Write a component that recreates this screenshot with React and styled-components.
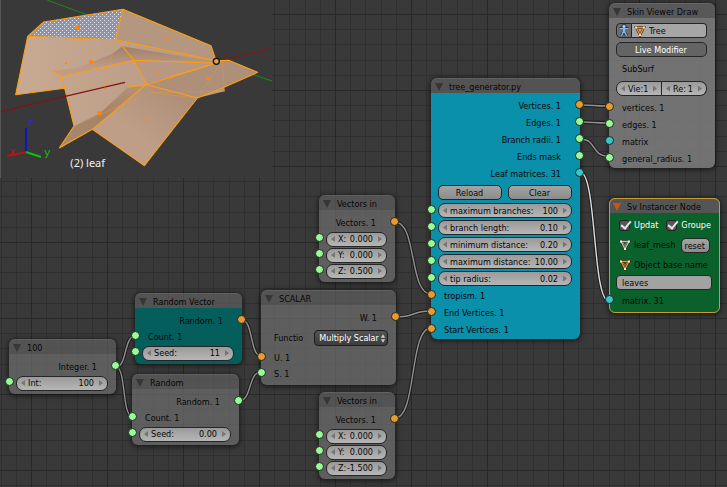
import React, { useId, useState } from "react";
import styled, { createGlobalStyle, css } from "styled-components";

const GlobalStyle = createGlobalStyle`
  * { box-sizing: border-box; }
  body { margin: 0; background: #393939; }
  body, button, input, select {
    font-family: "DejaVu Sans Condensed", "DejaVu Sans", sans-serif;
    font-size: 9px;
    line-height: 12px;
    color: #060606;
  }
`;

const SOCKETS = { vertex: "#e89a2e", data: "#97fc97", matrix: "#33c8cc" };

const Canvas = styled.main`
  position: relative;
  width: 100%;
  min-height: 100vh;
  overflow: hidden;
  background-color: #393939;
  background-image:
    linear-gradient(to right, #282828 1px, transparent 1px),
    linear-gradient(to bottom, #282828 1px, transparent 1px),
    linear-gradient(to right, transparent 15px, #303030 15px 16px, transparent 16px 30px,
      #303030 30px 31px, transparent 31px 46px, #303030 46px 47px, transparent 47px 61px,
      #303030 61px 62px, transparent 62px),
    linear-gradient(to bottom, transparent 15px, #303030 15px 16px, transparent 16px 30px,
      #303030 30px 31px, transparent 31px 46px, #303030 46px 47px, transparent 47px 61px,
      #303030 61px 62px, transparent 62px);
  background-size: 76px 76px;
  background-position: 31px 14px;
`;

const Viewport = styled.section`
  position: absolute;
  left: 0;
  top: 0;
  width: 272px;
  height: 178px;
  background: #393939;
  border-left: 1px solid #565656;
  svg { display: block; width: 100%; height: 100%; }
`;

const Wires = styled.svg`
  position: absolute;
  left: 0;
  top: 0;
  width: 100%;
  height: 100%;
  overflow: visible;
`;

const NodeFrame = styled.section`
  position: absolute;
  left: ${(p) => p.$x}px;
  top: ${(p) => p.$y}px;
  width: ${(p) => p.$w}px;
  border-radius: 6px;
  box-shadow: 0 1px 5px 1px rgba(0, 0, 0, 0.55);
  ${(p) => p.$active && css`outline: 1px solid #c99a35; outline-offset: -1px;`}
`;

const Header = styled.header`
  display: flex;
  align-items: center;
  gap: 6px;
  height: 15px;
  padding: 3px 4px 0;
  border-radius: 6px 6px 0 0;
  background: ${(p) => p.$fill};
  box-shadow: inset 0 1px 0 rgba(255, 255, 255, 0.08);
`;

const Collapse = styled.button`
  width: 8px;
  height: 8px;
  padding: 0;
  border: 0;
  background: ${(p) => p.$color};
  clip-path: polygon(0 0, 100% 0, 50% 100%);
`;

const Title = styled.h2`
  margin: 0;
  font-size: 9px;
  font-weight: 400;
  line-height: 12px;
  white-space: nowrap;
`;

const Body = styled.div`
  display: flex;
  flex-direction: column;
  padding: ${(p) => p.$top}px 8px ${(p) => p.$bottom}px 7px;
  border-radius: 0 0 6px 6px;
  background: ${(p) => p.$fill};
`;

const Row = styled.div`
  position: relative;
  display: flex;
  align-items: center;
  height: ${(p) => p.$h}px;
  gap: ${(p) => p.$gap || 0}px;
`;

const RowText = styled.span`
  flex: 1;
  padding: 0 11px 0 6px;
  text-align: ${(p) => (p.$out ? "right" : "left")};
  white-space: nowrap;
`;

const Socket = styled.i`
  position: absolute;
  top: calc(50% - 6px);
  ${(p) => (p.$out ? "right: -12px;" : "left: -11px;")}
  width: 9px;
  height: 9px;
  border: 1px solid #1c2a1c;
  border-radius: 50%;
  background: ${(p) => p.$color};
`;

const Pill = styled.div`
  display: flex;
  flex: 1;
  min-width: 0;
  align-items: center;
  height: 15px;
  padding: 0 4px;
  border: 1px solid #262626;
  border-radius: ${(p) =>
    p.$side === "left" ? "7px 0 0 7px" : p.$side === "right" ? "0 7px 7px 0" : "7px"};
  ${(p) => p.$side === "right" && "border-left: 0;"}
  background: linear-gradient(#9a9a9a, #b6b6b6);
  label { padding-left: 3px; white-space: nowrap; }
`;

const Step = styled.button`
  flex: none;
  width: 4px;
  height: 6px;
  padding: 0;
  border: 0;
  background: #757575;
  clip-path: ${(p) => (p.$next ? "polygon(0 0, 100% 50%, 0 100%)" : "polygon(100% 0, 0 50%, 100% 100%)")};
`;

const Value = styled.input`
  flex: 1;
  width: 0;
  min-width: 0;
  padding: 0 5px 0 0;
  border: 0;
  background: none;
  text-align: right;
  outline: none;
`;

const Button = styled.button`
  flex: ${(p) => (p.$fit ? "none" : 1)};
  height: 15px;
  padding: 1px 4px 0 3px;
  border: 1px solid #262626;
  border-radius: 5px;
  background: ${(p) => (p.$pressed ? "#646464" : "linear-gradient(#a3a3a3, #8c8c8c)")};
  color: ${(p) => (p.$pressed ? "#fff" : "#060606")};
`;

const SelectBox = styled.div`
  position: relative;
  width: 77px;
  margin-left: auto;
  svg { position: absolute; right: 2px; top: 3px; width: 6px; height: 11px; pointer-events: none; }
`;

const Select = styled.select`
  display: block;
  appearance: none;
  width: 100%;
  height: 16px;
  padding: 0 8px 0 4px;
  border: 1px solid #1c1c1c;
  border-radius: 4px;
  background: linear-gradient(#545454, #3d3d3d);
  color: #fff;
`;

const TextBox = styled.input`
  width: 100%;
  height: 15px;
  padding: 0 5px;
  border: 1px solid #262626;
  border-radius: 4px;
  background: #a2a2a2;
  outline: none;
`;

const IconButton = styled.button`
  display: flex;
  align-items: center;
  justify-content: center;
  width: 16px;
  height: 15px;
  padding: 0;
  border: 1px solid #262626;
  border-radius: 4px 0 0 4px;
  background: #6c6c6c;
`;

const ObjectPicker = styled.label`
  display: flex;
  flex: 1;
  align-items: center;
  gap: 3px;
  height: 15px;
  padding: 0 2px;
  border: 1px solid #262626;
  border-left: 0;
  border-radius: 0 4px 4px 0;
  background: #a6a6a6;
`;

const PlainInput = styled.input`
  flex: 1;
  width: 0;
  min-width: 0;
  padding: 0;
  border: 0;
  background: none;
  outline: none;
`;

const CheckLabel = styled.label`
  display: flex;
  align-items: center;
  gap: 4px;
  color: #fff;
`;

const Check = styled.input`
  position: relative;
  appearance: none;
  width: 11px;
  height: 11px;
  margin: 0;
  border: 1px solid #222;
  border-radius: 3px;
  background: #565656;
  &:checked::after {
    content: "";
    position: absolute;
    left: 3px;
    top: -2px;
    width: 4px;
    height: 8px;
    border: solid #e4e4e4;
    border-width: 0 2px 2px 0;
    transform: rotate(40deg);
  }
`;

const CheckRow = styled(Row)`
  padding-left: 3px;
  gap: 8px;
`;

const IconRow = styled(Row)`
  gap: 3px;
  padding: 0 2px 0 3px;
  white-space: nowrap;
  svg { flex: none; }
`;

const IconRowText = styled.span`
  flex: 1;
`;

const Stack = styled.div`
  display: flex;
  flex-direction: column;
  gap: 4px;
`;

const FieldRow = styled.div`
  display: flex;
  margin-bottom: ${(p) => p.$after || 0}px;
`;

function Port({ kind, out, h = 16, children }) {
  return (
    <Row $h={h}>
      <RowText $out={out}>{children}</RowText>
      <Socket $out={out} $color={SOCKETS[kind]} />
    </Row>
  );
}

function NumberField({ label, value, side }) {
  const id = useId();
  const [text, setText] = useState(value);
  return (
    <Pill $side={side}>
      <Step type="button" aria-label={`Decrease ${label}`} />
      <label htmlFor={id}>{label}</label>
      <Value id={id} value={text} onChange={(e) => setText(e.target.value)} />
      <Step type="button" $next aria-label={`Increase ${label}`} />
    </Pill>
  );
}

function FieldPort({ label, value, h = 16 }) {
  return (
    <Row $h={h}>
      <Socket $color={SOCKETS.data} />
      <NumberField label={label} value={value} />
    </Row>
  );
}

const GREY = "rgba(112, 112, 112, 0.68)";
const GREY_HEAD = "rgba(96, 96, 96, 0.68)";

function Node({ title, x, y, w, fill = GREY, head = GREY_HEAD, top = 5, bottom = 3, active, children }) {
  return (
    <NodeFrame $x={x} $y={y} $w={w} $active={active}>
      <Header $fill={head}>
        <Collapse type="button" aria-label={`Collapse ${title}`} $color={active ? "#c4561c" : "#363636"} />
        <Title>{title}</Title>
      </Header>
      <Body $fill={fill} $top={top} $bottom={bottom}>{children}</Body>
    </NodeFrame>
  );
}

function MeshIcon({ stroke, dots }) {
  return (
    <svg width="12" height="12" viewBox="0 0 12 12" fill="none" aria-hidden="true">
      <path d="M2 2.5H10L6 10Z" stroke="#30200f" strokeWidth="2.4" />
      <path d="M2 2.5H10L6 10Z" stroke={stroke} strokeWidth="1.3" />
      <path d="M3.6 3.5L6 6.5L8.4 3.5M6 6.5V9" stroke={stroke} strokeWidth=".7" />
      <g fill={dots}>
        <rect x="1" y="1.5" width="2" height="2" />
        <rect x="9" y="1.5" width="2" height="2" />
        <rect x="5" y="9" width="2" height="2" />
      </g>
    </svg>
  );
}

function FigureIcon() {
  return (
    <svg width="12" height="13" viewBox="0 0 12 13" aria-hidden="true">
      <g stroke="#1d2c42" strokeWidth="3" strokeLinejoin="round" fill="none">
        <path d="M1.5 4.5H10.5M6 4.5V8M6 7.5L3.5 11.5M6 7.5L8.5 11.5" />
        <circle cx="6" cy="2.5" r="1" />
      </g>
      <g stroke="#8fb4e6" strokeWidth="1.5" fill="none">
        <path d="M1.5 4.8H10.5M5.5 4.5V8M6.5 4.5V8M5.5 7.5L3.5 11.8M6.5 7.5L8.5 11.8" />
      </g>
      <circle cx="6" cy="2.4" r="1.6" fill="#a9c8f2" />
    </svg>
  );
}

const LINKS = [
  [580, 105, 608, 106],
  [580, 122, 608, 123],
  [580, 139, 608, 156],
  [580, 172, 609, 301, true],
  [395, 222, 431, 294],
  [396, 317, 431, 311],
  [395, 418, 431, 328],
  [242, 320, 261, 356],
  [239, 401, 261, 372],
  [116, 367, 135, 336],
  [116, 367, 132, 416],
];

function NodeLinks() {
  return (
    <Wires aria-hidden="true">
      {LINKS.map(([x1, y1, x2, y2, bright]) => {
        const h = Math.round((x2 - x1) * 0.6);
        const d = `M${x1} ${y1}C${x1 + h} ${y1} ${x2 - h} ${y2} ${x2} ${y2}`;
        return (
          <g key={d} fill="none">
            <path d={d} stroke="#1b1b1b" strokeWidth="3.4" />
            <path d={d} stroke={bright ? "#dcdcdc" : "#909090"} strokeWidth="1.4" />
          </g>
        );
      })}
    </Wires>
  );
}

function LeafScene() {
  return (
    <Viewport aria-label="3D view">
      <svg viewBox="3 0 813 534" preserveAspectRatio="none">
        <defs>
          <pattern id="dots" width="12" height="12" patternUnits="userSpaceOnUse">
            <rect width="12" height="12" fill="#9294a6" />
            <rect width="3" height="3" fill="#e2e4ee" />
            <rect x="6" y="6" width="3" height="3" fill="#e2e4ee" />
          </pattern>
          <linearGradient id="skin" x1="0" y1="0" x2="1" y2="0">
            <stop offset="0" stopColor="#c8aa93" />
            <stop offset="1" stopColor="#b39480" />
          </linearGradient>
          <linearGradient id="fold" x1="0" y1="0" x2="0" y2="1">
            <stop offset="0" stopColor="#a08069" />
            <stop offset=".7" stopColor="#bd9d87" />
          </linearGradient>
          <linearGradient id="petal" x1="1" y1="0" x2="0" y2="1">
            <stop offset="0" stopColor="#a98a74" />
            <stop offset=".6" stopColor="#bf9e87" />
          </linearGradient>
          <linearGradient id="crease" x1="0" y1="1" x2="1" y2="0">
            <stop offset="0" stopColor="#a88a70" />
            <stop offset=".5" stopColor="#a48268" />
            <stop offset="1" stopColor="#b5947b" />
          </linearGradient>
        </defs>
        <path d="M141 0L262 45M760 224L816 243" stroke="#1a8a1a" strokeWidth="3" fill="none" />
        <path d="M648 183L816 146" stroke="#8a1414" strokeWidth="3" />
        <path d="M83 109L346 119L369 28L633 137L648 182L686 181L773 217L672 262L674 274L592 294L433 497L277 388L178 444L222 378L194 265L47 284Z" fill="url(#skin)" />
        <path d="M369 28L633 137L648 182L350 121Z" fill="#b5967f" />
        <path d="M83 109L131 66L369 28L346 119Z" fill="url(#dots)" />
        <path d="M156 213L240 202L335 162L367 139L648 186L402 181L186 229Z" fill="url(#fold)" />
        <path d="M402 181L648 190L440 252Z" fill="#b89882" />
        <path d="M440 252L648 190L686 181L773 217L672 262L592 294Z" fill="#ad8f7a" />
        <path d="M384 262L440 254L592 294L433 497L277 388Z" fill="url(#petal)" />
        <path d="M178 444L222 378L300 340L384 262L440 254L277 388Z" fill="url(#crease)" />
        <g fill="none" stroke="#dd9c45" strokeWidth="2.5" opacity=".5">
          <path d="M156 213L346 121M346 119L318 248L194 265M318 248L440 254L450 278L592 294M222 378L450 278L674 274M350 121L580 165L667 193L674 274M592 294L655 200" />
        </g>
        <g fill="none" stroke="#ff9e0c" strokeWidth="3.2" strokeLinejoin="round">
          <path d="M83 109L131 66L369 28L633 137L648 182L686 181L773 217L672 262L592 294L433 497L277 388L178 444L222 378L194 265L47 284L83 109L346 119L648 182" />
          <path d="M369 28L346 119M367 139L402 181L440 252L277 388M156 213L186 229L402 181L648 190L440 254L384 262M186 229L194 265M440 254L592 294M648 190L510 230" />
        </g>
        <path d="M0 335L375 247" stroke="#7e1512" strokeWidth="3.5" />
        <g fill="#ff860a">
          <rect x="225" y="75" width="12" height="12" />
          <rect x="267" y="180" width="12" height="12" />
          <rect x="293" y="333" width="12" height="12" />
          <rect x="495" y="114" width="13" height="6" />
          <rect x="617" y="231" width="13" height="7" />
          <rect x="435" y="357" width="6" height="6" />
          <rect x="474" y="214" width="6" height="6" />
          <rect x="196" y="187" width="5" height="5" />
          <rect x="312" y="263" width="5" height="5" />
        </g>
        <circle cx="649" cy="184" r="9" fill="#e8a04c" stroke="#111" strokeWidth="4" />
        <path d="M78 384V456" stroke="#1212cc" strokeWidth="6" />
        <path d="M78 456L22 468" stroke="#c01010" strokeWidth="6" />
        <path d="M78 456L123 471" stroke="#10c010" strokeWidth="6" />
        <g fontFamily="DejaVu Sans" fontSize="33">
          <text x="84" y="378" fill="#2828e0">z</text>
          <text x="27" y="465" fill="#b81414">x</text>
          <text x="132" y="468" fill="#1cb41c">y</text>
        </g>
        <text x="211" y="502" fontFamily="Noto Sans" fontSize="33" fill="#f0f0f0">(2) leaf</text>
      </svg>
    </Viewport>
  );
}

function VectorNode({ y, z }) {
  return (
    <Node title="Vectors in" x={319} y={y} w={76}>
      <Port kind="vertex" out>Vectors. 1</Port>
      <FieldPort label="X:" value="0.000" />
      <FieldPort label="Y:" value="0.000" />
      <FieldPort label="Z:" value={z} />
    </Node>
  );
}

export default function App() {
  return (
    <>
      <GlobalStyle />
      <Canvas>
        <LeafScene />
        <NodeLinks />

        <Node title="100" x={9} y={339} w={107}>
          <Port kind="data" out>Integer. 1</Port>
          <FieldPort label="Int:" value="100" />
        </Node>

        <Node title="Random Vector" x={135} y={293} w={107} fill="rgba(0, 98, 96, 0.92)">
          <Port kind="vertex" out>Random. 1</Port>
          <Port kind="data">Count. 1</Port>
          <FieldPort label="Seed:" value="11" />
        </Node>

        <Node title="Random" x={132} y={374} w={107}>
          <Port kind="data" out>Random. 1</Port>
          <Port kind="data">Count. 1</Port>
          <FieldPort label="Seed:" value="0.00" />
        </Node>

        <Node title="SCALAR" x={261} y={290} w={135}>
          <Port kind="vertex" out>W. 1</Port>
          <Row $h={24}>
            <RowText as="label" htmlFor="scalar-function">Functio</RowText>
            <SelectBox>
              <Select id="scalar-function" defaultValue="Multiply Scalar">
                <option>Multiply Scalar</option>
              </Select>
              <svg viewBox="0 0 7 11" fill="#ccc" aria-hidden="true">
                <path d="M1 4.5L3.5 .5L6 4.5ZM1 6.5L3.5 10.5L6 6.5Z" />
              </svg>
            </SelectBox>
          </Row>
          <Port kind="vertex">U. 1</Port>
          <Port kind="data">S. 1</Port>
        </Node>

        <VectorNode y={195} z="0.500" />
        <VectorNode y={392} z="-1.500" />

        <Node title="tree_generator.py" x={431} y={78} w={149} top={4} bottom={1} head="rgba(84, 84, 84, 0.95)" fill="rgba(8, 150, 178, 0.94)">
          <Port kind="vertex" out h={17}>Vertices. 1</Port>
          <Port kind="data" out h={17}>Edges. 1</Port>
          <Port kind="data" out h={17}>Branch radii. 1</Port>
          <Port kind="data" out h={17}>Ends mask</Port>
          <Port kind="matrix" out h={17}>Leaf matrices. 31</Port>
          <Row $h={20} $gap={6}>
            <Button type="button">Reload</Button>
            <Button type="button">Clear</Button>
          </Row>
          <FieldPort h={17} label="maximum branches:" value="100" />
          <FieldPort h={17} label="branch length:" value="0.10" />
          <FieldPort h={17} label="minimum distance:" value="0.20" />
          <FieldPort h={17} label="maximum distance:" value="10.00" />
          <FieldPort h={17} label="tip radius:" value="0.02" />
          <Port kind="vertex" h={17}>tropism. 1</Port>
          <Port kind="vertex" h={17}>End Vertices. 1</Port>
          <Port kind="vertex" h={17}>Start Vertices. 1</Port>
        </Node>

        <Node title="Skin Viewer Draw" x={609} y={3} w={106} bottom={1} head="rgba(92, 92, 92, 0.9)" fill="rgba(124, 124, 124, 0.86)">
          <Stack>
            <FieldRow>
              <IconButton type="button" aria-label="Armature"><FigureIcon /></IconButton>
              <ObjectPicker>
                <MeshIcon stroke="#e8903c" dots="#ffd9a8" />
                <PlainInput aria-label="Object" defaultValue="Tree" />
              </ObjectPicker>
            </FieldRow>
            <FieldRow>
              <Button type="button" $pressed aria-pressed="true">Live Modifier</Button>
            </FieldRow>
          </Stack>
          <Row $h={24}><RowText>SubSurf</RowText></Row>
          <FieldRow $after={3}>
            <NumberField label="Vie:" value="1" side="left" />
            <NumberField label="Re:" value="1" side="right" />
          </FieldRow>
          <Port kind="vertex" h={17}>vertices. 1</Port>
          <Port kind="data" h={17}>edges. 1</Port>
          <Port kind="matrix" h={17}>matrix</Port>
          <Port kind="data" h={17}>general_radius. 1</Port>
        </Node>

        <Node title="Sv Instancer Node" x={609} y={198} w={111} top={2} bottom={1} active head="rgba(86, 86, 86, 0.95)" fill="rgba(8, 100, 42, 0.94)">
          <CheckRow $h={20}>
            <CheckLabel><Check type="checkbox" defaultChecked />Updat</CheckLabel>
            <CheckLabel><Check type="checkbox" defaultChecked />Groupe</CheckLabel>
          </CheckRow>
          <IconRow $h={20}>
            <MeshIcon stroke="#b8c4b8" dots="#e8f0e8" />
            <IconRowText>leaf_mesh</IconRowText>
            <Button type="button" $fit>reset</Button>
          </IconRow>
          <IconRow as="label" htmlFor="base-name" $h={20}>
            <MeshIcon stroke="#e8903c" dots="#ffe2c0" />
            Object base name
          </IconRow>
          <TextBox id="base-name" defaultValue="leaves" />
          <Port kind="matrix" h={22}>matrix. 31</Port>
        </Node>
      </Canvas>
    </>
  );
}
